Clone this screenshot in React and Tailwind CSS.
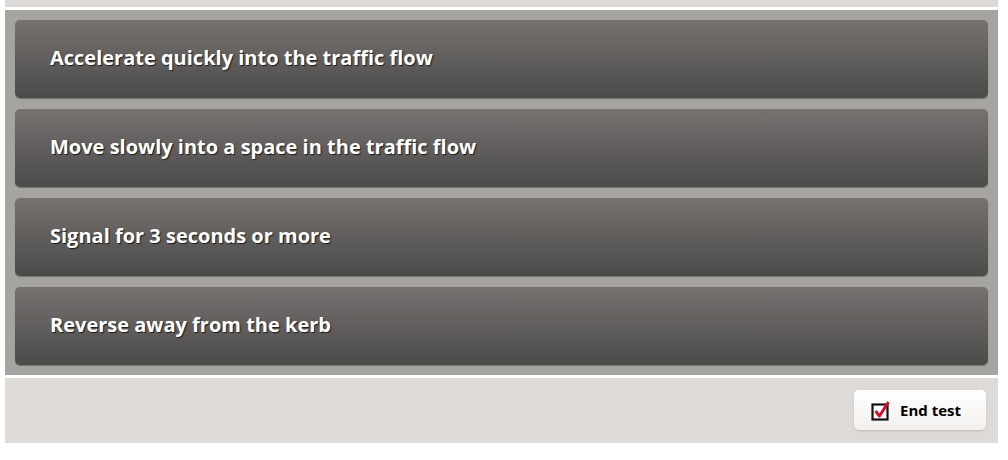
import React from 'react';

const answers = [
  'Accelerate quickly into the traffic flow',
  'Move slowly into a space in the traffic flow',
  'Signal for 3 seconds or more',
  'Reverse away from the kerb',
];

const CheckIcon = () => (
  <svg width="20" height="22" viewBox="0 0 20 22" className="block">
    <rect x="1.5" y="5.5" width="15" height="15" fill="#fff" stroke="#111" strokeWidth="2.2" />
    <path d="M4.5 12 L8.5 17 L17.5 3" fill="none" stroke="#d0102a" strokeWidth="3" strokeLinejoin="round" />
  </svg>
);

const App = () => {
  return (
    <div className="w-[1008px] h-[460px] bg-white">
      <div className="w-[993px] ml-[5px] font-['Open_Sans',sans-serif]">
        <div className="h-[7px] bg-[#dcd9d6]"></div>
        <div className="mt-[3px] bg-[#a6a4a1] px-[10px] py-[10px] flex flex-col gap-[11px]">
          {answers.map((a) => (
            <div
              key={a}
              className="h-[78px] rounded-[5px] bg-gradient-to-b from-[#767270] to-[#4c4b4a] flex items-center pl-[35px] pb-[2px] shadow-[0_1px_1px_rgba(0,0,0,0.3)]"
            >
              <span className="text-white font-bold text-[20px] leading-none [text-shadow:1px_1px_1px_rgba(0,0,0,0.7)]">
                {a}
              </span>
            </div>
          ))}
        </div>
        <div className="mt-[3px] h-[65px] bg-[#dddad7] flex items-start justify-end pr-[12px] pt-[12px]">
          <button className="w-[132px] h-[40px] rounded-[5px] bg-gradient-to-b from-white to-[#f3f1ef] shadow-[0_1px_2px_rgba(0,0,0,0.15)] flex items-center pl-[17px] gap-[9px]">
            <CheckIcon />
            <span className="text-[15px] font-bold text-black">End test</span>
          </button>
        </div>
      </div>
    </div>
  );
};

export default App;
